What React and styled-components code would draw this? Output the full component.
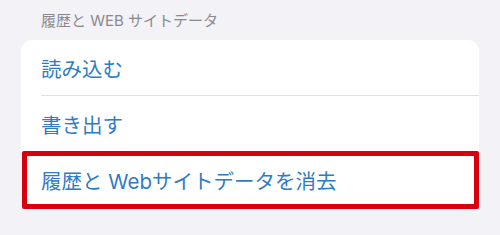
import React from "react";
import styled, { createGlobalStyle } from "styled-components";

const Global = createGlobalStyle`
  html, body { margin: 0; padding: 0; background: #f2f2f7; }
  body { font-family: "Inter", "Noto Sans CJK JP", sans-serif; }
`;

const Page = styled.div`
  width: 500px;
  height: 235px;
  background: #f2f2f7;
  box-sizing: border-box;
  padding: 0 21px 0 21px;
  overflow: hidden;
`;

const SectionHeader = styled.div`
  height: 40px;
  box-sizing: border-box;
  padding: 12px 0 0 20px;
  font-size: 15px;
  line-height: 18px;
  color: #8a8a8e;
`;

const Card = styled.div`
  background: #ffffff;
  border-radius: 11px;
  display: flex;
  flex-direction: column;
`;

const Row = styled.div`
  position: relative;
  height: 56px;
  display: flex;
  align-items: center;
  padding-left: 20px;
  font-size: 20.5px;
  color: #2f7cc3;
  ${(p) =>
    p.$divider &&
    `
    &::after {
      content: "";
      position: absolute;
      left: 20px;
      right: 0;
      bottom: 0;
      height: 1px;
      background: #e1e1e5;
    }
  `}
`;

const Highlight = styled.div`
  position: absolute;
  left: 1px;
  right: 0;
  top: -1px;
  bottom: -1px;
  border: 5px solid #d9000d;
  border-radius: 2px;
  pointer-events: none;
`;

export default function App() {
  return (
    <>
      <Global />
      <Page>
        <SectionHeader>履歴と WEB サイトデータ</SectionHeader>
        <Card>
          <Row $divider>読み込む</Row>
          <Row>書き出す</Row>
          <Row>
            履歴と Webサイトデータを消去
            <Highlight />
          </Row>
        </Card>
      </Page>
    </>
  );
}
